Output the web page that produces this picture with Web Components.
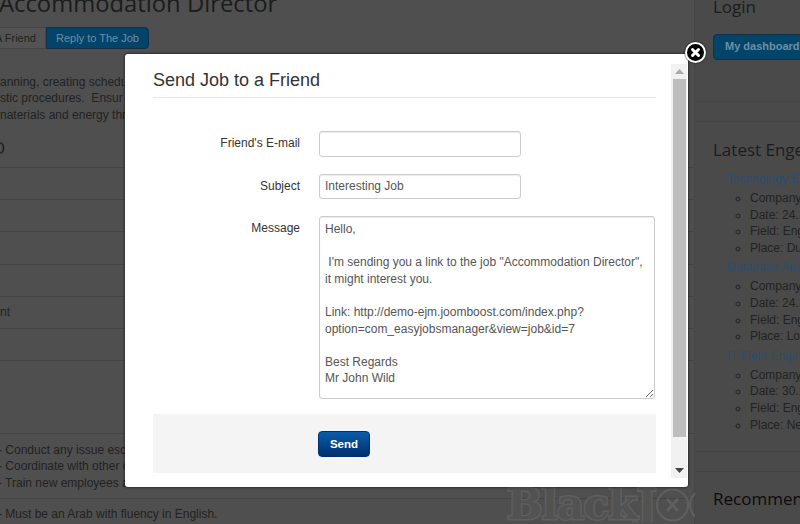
<!DOCTYPE html>
<html lang="en">
<head>
<meta charset="utf-8">
<title>Send Job to a Friend</title>
<style>
  html, body { margin: 0; height: 524px; overflow: hidden; background: #4e4e4e; }
  body { font: 12px/16.6px "Liberation Sans", Arial, sans-serif; color: #222; }
</style>
</head>
<body>
<job-page>
  <job-main slot="main"></job-main>
  <job-sidebar slot="side"></job-sidebar>
</job-page>
<black-watermark></black-watermark>
<job-modal heading="Send Job to a Friend">
  <form-row label="Friend's E-mail"><input type="text"></form-row>
  <form-row label="Subject"><input type="text" value="Interesting Job"></form-row>
  <form-row label="Message"><textarea> </textarea></form-row>
</job-modal>

<script>
const MESSAGE = `Hello,

 I'm sending you a link to the job "Accommodation Director", it might interest you.

Link: http://demo-ejm.joomboost.com/index.php?option=com_easyjobsmanager&view=job&id=7

Best Regards
Mr John Wild`;

// two column page that sits behind the dialog
class JobPage extends HTMLElement {
  constructor() {
    super();
    this.attachShadow({ mode: 'open' });
    this.shadowRoot.innerHTML = `
      <style>
        :host { display: flex; width: 800px; height: 524px; overflow: hidden; }
        .main { flex: 0 0 694px; border-right: 1px solid #464646; background: #4f4f4f; }
        .side { flex: 1; min-width: 0; background: #4a4a4a; position: relative; z-index: 1; }
      </style>
      <div class="main"><slot name="main"></slot></div>
      <div class="side"><slot name="side"></slot></div>
    `;
  }
}

class JobMain extends HTMLElement {
  constructor() {
    super();
    this.attachShadow({ mode: 'open' });
    this.shadowRoot.innerHTML = `
      <style>
        :host { display: block; color: #222; overflow: hidden; }
        h1 { margin: -12px 0 0 -1px; font: 400 23.8px/30px "Open Sans", sans-serif; color: #1c1c1c; white-space: nowrap; }
        .btns { display: flex; margin-top: 9px; height: 22px; font-size: 11px; line-height: 20px; white-space: nowrap; }
        .btns span { box-sizing: border-box; height: 22px; }
        .friend { flex: 0 0 46px; border: 1px solid #454545; border-left: 0; background: #535353; text-indent: -5px; color: #222; overflow: hidden; }
        .reply { flex: 0 0 103px; border: 1px solid #123147; border-radius: 0 4px 4px 0; background: #03446b; color: #6e8fa3; text-align: center; }
        p { margin: 24.7px 0 0; white-space: pre; }
        h2 { margin: 12.5px 0 0 -8px; font: 400 17px/24px "Open Sans", sans-serif; color: #1c1c1c; height: 31px; white-space: nowrap; }
        .rows div { box-sizing: border-box; height: 32.2px; border-top: 1px solid #444; line-height: 31px; }
        .rows .tall { height: 73px; }
        .list { border-top: 1px solid #444; padding-top: 7.5px; height: 65px; box-sizing: border-box; white-space: pre; text-indent: -2px; }
        .last { border-top: 1px solid #444; padding-top: 7px; white-space: pre; text-indent: -2px; }
        .list div { text-indent: -2px; }
      </style>
      <h1>Accommodation Director</h1>
      <div class="btns"><span class="friend">A Friend</span><span class="reply">Reply to The Job</span></div>
      <p>anning, creating schedul
stic procedures.  Ensur
naterials and energy thr</p>
      <h2>O</h2>
      <div class="rows">
        <div></div><div></div><div></div><div></div><div>nt</div><div></div><div class="tall"></div>
      </div>
      <div class="list"><div>- Conduct any issue esc</div><div>- Coordinate with other c</div><div>- Train new employees a</div></div>
      <div class="last">- Must be an Arab with fluency in English.</div>
    `;
  }
}

class JobSidebar extends HTMLElement {
  constructor() {
    super();
    this.attachShadow({ mode: 'open' });
    const jobs = [
      ['Technology En', 'Date: 24.1', 'Field: Eng', 'Place: Du'],
      ['Database Ana', 'Date: 24.1', 'Field: Eng', 'Place: Lo'],
      ['IT Field Engin', 'Date: 30.1', 'Field: Eng', 'Place: Ne']
    ];
    const list = jobs.map(j => `
      <a>${j[0]}</a>
      <ul><li>Company</li><li>${j[1]}</li><li>${j[2]}</li><li>${j[3]}</li></ul>
    `).join('');
    this.shadowRoot.innerHTML = `
      <style>
        :host { display: block; white-space: nowrap; overflow: hidden; height: 524px; }
        section { box-sizing: border-box; padding-left: 18px; border-bottom: 1px solid #444; }
        h3 { margin: 0; font: 400 17px/24px "Open Sans", sans-serif; color: #1c1c1c; }
        .gap { height: 19px; border-bottom: 1px solid #444; }
        .login { height: 107px; margin-top: -5px; }
        .dash { display: block; margin-top: 15px; width: 110px; height: 26px; box-sizing: border-box; padding-left: 11px;
          border: 1px solid #123147; border-radius: 4px; background: #03446b; color: #6e8fa3; font-size: 11px; font-weight: 700; line-height: 23px; }
        .latest { height: 330px; padding-top: 16px; }
        a { display: block; margin: 3px 0 0 14px; color: #2a4f6e; line-height: 17px; }
        h3 + a { margin-top: 9px; }
        ul { margin: 2px 0 0; padding: 0 0 0 37px; list-style: circle; }
        li { line-height: 16.6px; }
        .rec { padding-top: 15px; border: 0; }
        .rec h3 { color: #0c0c0c; }
      </style>
      <section class="login"><h3>Login</h3><span class="dash">My dashboard</span></section>
      <div class="gap"></div>
      <section class="latest"><h3>Latest Enge</h3>${list}</section>
      <div class="gap"></div>
      <section class="rec"><h3>Recommen</h3></section>
    `;
  }
}

// faint stamp across the bottom right corner
class BlackWatermark extends HTMLElement {
  constructor() {
    super();
    this.attachShadow({ mode: 'open' });
    const mark = `
      <svg width="33" height="34" viewBox="0 0 33 34" fill="none" stroke="#5f5f5f">
        <circle cx="16.5" cy="17" r="15.500" stroke-width="2"/>
        <path d="M11 11l11 12M22 11L11 23" stroke-width="3"/>
      </svg>`;
    this.shadowRoot.innerHTML = `
      <style>
        :host { position: absolute; left: 507px; top: 487px; z-index: 0; display: flex; align-items: center; height: 36px; width: 293px; overflow: hidden; }
        span { font: 700 42px/36px "DejaVu Serif", serif; color: #525252; -webkit-text-stroke: 3px #5f5f5f; paint-order: stroke fill; white-space: nowrap; letter-spacing: -0.7px; }
        svg { flex: none; }
      </style>
      <span>BlackJ</span>${mark}${mark}<span>mla</span>
    `;
  }
}

// right aligned label + control, control comes in through the slot
class FormRow extends HTMLElement {
  constructor() {
    super();
    this.attachShadow({ mode: 'open' });
    this.shadowRoot.innerHTML = `
      <style>
        :host { display: flex; gap: 19px; margin-bottom: 17px; color: #333; }
        label { flex: 0 0 147px; text-align: right; padding-top: 4.2px; }
        ::slotted(input) { box-sizing: border-box; width: 202px; height: 25.5px; margin: 0; padding: 0 5px; border: 1px solid #ccc; border-radius: 3px;
          box-shadow: inset 0 1px 1px rgba(0,0,0,.08); font: 12px "Liberation Sans", Arial, sans-serif; color: #555; outline: none; }
        ::slotted(textarea) { box-sizing: border-box; display: block; width: 336px; height: 183px; margin: 0; padding: 4px 5px; border: 1px solid #ccc; border-radius: 3px;
          box-shadow: inset 0 1px 1px rgba(0,0,0,.08); font: 12px/16.6px "Liberation Sans", Arial, sans-serif; color: #555; outline: none; overflow: hidden; }
      </style>
      <label></label>
      <slot></slot>
    `;
  }

  connectedCallback() {
    this.shadowRoot.querySelector('label').textContent = this.getAttribute('label');
  }
}

class JobModal extends HTMLElement {
  constructor() {
    super();
    this.attachShadow({ mode: 'open' });
    this.shadowRoot.innerHTML = `
      <style>
        :host { position: absolute; left: 125px; top: 54px; z-index: 2; box-sizing: border-box; width: 563px; height: 433px;
          display: flex; padding: 10px 1px 9px 28px; background: #fff; border-radius: 3px; box-shadow: 0 0 3px rgba(0,0,0,.8); }
        .body { flex: 0 0 503px; margin-right: 15px; display: flex; flex-direction: column; }
        h3 { margin: 0 0 33px; height: 34px; box-sizing: border-box; border-bottom: 1px solid #e8e8e8;
          font: 400 18px/32px "Liberation Sans", Arial, sans-serif; color: #333; }
        .foot { margin-top: -2px; height: 59px; box-sizing: border-box; padding: 17px 0 0 165px; background: #f4f4f4; }
        button { display: block; width: 52px; height: 26px; padding: 0; border: 1px solid #00306b; border-radius: 4px;
          background: linear-gradient(#0a5cab, #00316f); color: #fff; font: 700 11.5px "Liberation Sans", Arial, sans-serif; }
        .bar { flex: 0 0 16px; display: flex; flex-direction: column; background: #f1f1f1; }
        .arrow { flex: 0 0 15px; display: flex; align-items: center; justify-content: center; }
        .thumb { height: 358px; margin: 0 1px 0 2px; background: #bdbdbd; }
        .fill { flex: 1; }
        .close { position: absolute; right: -18px; top: -12px; width: 21px; height: 21px; box-sizing: border-box; border: 2px solid #fff; border-radius: 50%;
          background: #000; box-shadow: 0 0 2px #000; display: flex; align-items: center; justify-content: center; }
      </style>
      <div class="body">
        <h3></h3>
        <slot></slot>
        <div class="foot"><button type="button">Send</button></div>
      </div>
      <div class="bar">
        <div class="arrow"><svg width="9" height="5" viewBox="0 0 9 5"><path d="M4.5 0L9 5H0z" fill="#a8a8a8"/></svg></div>
        <div class="thumb"></div>
        <div class="fill"></div>
        <div class="arrow"><svg width="9" height="5" viewBox="0 0 9 5"><path d="M0 0h9L4.500 5z" fill="#444"/></svg></div>
      </div>
      <div class="close"><svg width="11" height="11" viewBox="0 0 11 11"><path d="M2.500 2.500l6 6M8.500 2.500l-6 6" stroke="#fff" stroke-width="3" stroke-linecap="round"/></svg></div>
    `;
  }

  connectedCallback() {
    this.shadowRoot.querySelector('h3').textContent = this.getAttribute('heading');
    const area = this.querySelector('textarea');
    if (area) area.value = MESSAGE;
  }
}

customElements.define('job-page', JobPage);
customElements.define('job-main', JobMain);
customElements.define('job-sidebar', JobSidebar);
customElements.define('black-watermark', BlackWatermark);
customElements.define('form-row', FormRow);
customElements.define('job-modal', JobModal);
</script>
</body>
</html>
